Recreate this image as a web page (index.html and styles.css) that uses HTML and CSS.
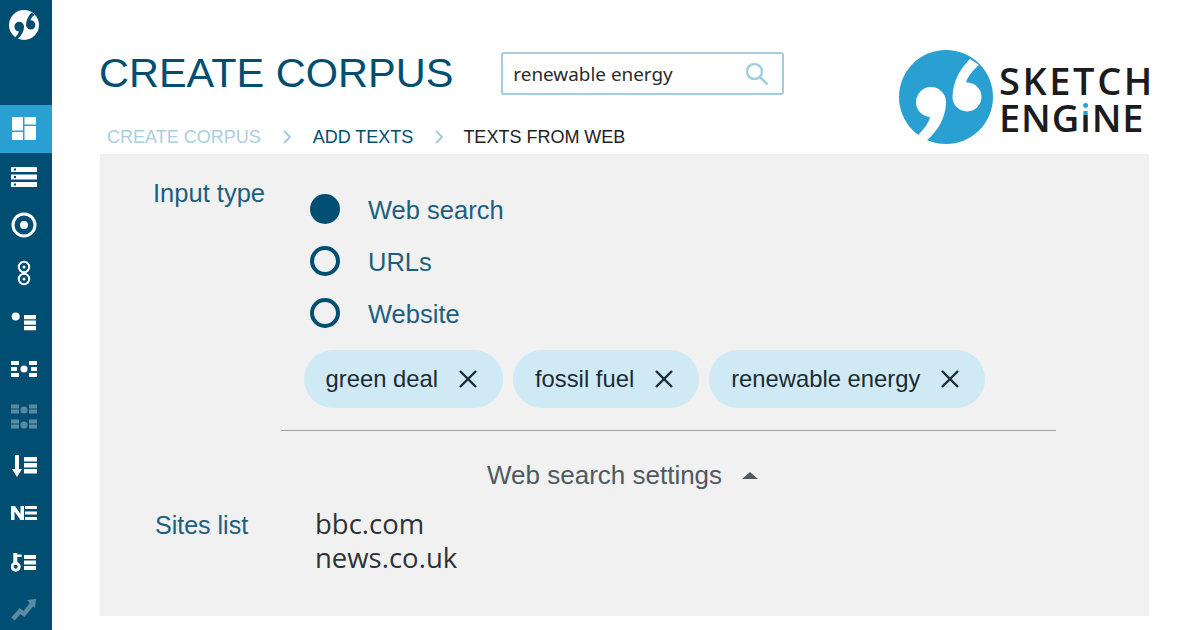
FILE: index.html
```html
<!DOCTYPE html>
<html lang="en">
<head>
<meta charset="utf-8">
<title>Create corpus</title>
<link rel="stylesheet" href="styles.css">
</head>
<body>
<div class="app">
  <nav class="sidebar">
    <div class="brand">
      <svg width="30" height="30" viewBox="0 0 94 94"><circle cx="47" cy="47" r="47" fill="#fff"/><path d="M17 52a15 15 0 0 1 30 0C47 68 38 82 27 91L19 85C26 78 30 72 31 67A15 15 0 0 1 17 52Z" fill="#004f73"/><path d="M53.500 47C54 30 62 18 71 9L80 15C74 20 69 26 67 32.500A14.500 14.500 0 1 1 53.500 47Z" fill="#004f73"/></svg>
    </div>
    <a class="nav-item active"><svg width="24" height="24" viewBox="0 0 24 24" fill="#fff"><rect x="0" y="0" width="11" height="13.500"/><rect x="12.500" y="0" width="11.500" height="7.500"/><rect x="12.500" y="9" width="11.500" height="14"/><rect x="0" y="15" width="11" height="8"/></svg></a>
    <a class="nav-item"><svg width="26" height="22" viewBox="0 0 26 22" fill="#fff"><path d="M0 1h26v5H0zM0 8.500h26v5H0zM0 16h26v5H0z"/><g fill="#004f73"><rect x="3" y="2.500" width="2" height="2"/><rect x="3" y="10" width="2" height="2"/><rect x="3" y="17.500" width="2" height="2"/></g></svg></a>
    <a class="nav-item"><svg width="26" height="26" viewBox="0 0 26 26"><circle cx="13" cy="13" r="11" fill="none" stroke="#fff" stroke-width="3"/><circle cx="13" cy="13" r="4" fill="#fff"/></svg></a>
    <a class="nav-item"><svg width="14" height="26" viewBox="0 0 14 26" fill="none" stroke="#fff" stroke-width="2"><circle cx="7" cy="7" r="5.200"/><circle cx="7" cy="19" r="5.200"/><circle cx="7" cy="7" r="1.500" fill="#fff" stroke="none"/><circle cx="7" cy="19" r="1.500" fill="#fff" stroke="none"/></svg></a>
    <a class="nav-item"><svg width="26" height="22" viewBox="0 0 26 22" fill="#fff"><circle cx="4.700" cy="6.600" r="4"/><path d="M13 5h12v4.200H13zM13 10.500h12v4.200H13zM13 16h12v4.200H13z"/></svg></a>
    <a class="nav-item"><svg width="26" height="18" viewBox="0 0 26 18" fill="#fff"><path d="M0 1h8v4H0zM0 13h8v4H0zM18 1h8v4h-8zM18 13h8v4h-8zM0 7h6v4H0zM20 7h6v4h-6z"/><circle cx="13" cy="9" r="3.500"/></svg></a>
    <a class="nav-item dim"><svg width="26" height="26" viewBox="0 0 26 26" fill="#fff"><path d="M0 .500h8v4H0zM18 .500h8v4h-8zM0 5.500h8v4H0zM18 5.500h8v4h-8zM0 15.500h8v4H0zM18 15.500h8v4h-8zM0 20.500h8v4H0zM18 20.500h8v4h-8z"/><circle cx="13" cy="6" r="3.500"/><circle cx="13" cy="21" r="3.500"/></svg></a>
    <a class="nav-item"><svg width="26" height="26" viewBox="0 0 26 26" fill="#fff"><path d="M4 3h4v14h3l-5 8-5-8h3z"/><path d="M13 5h13v4.500H13zM13 11h13v4.500H13zM13 17h13v4.500H13z"/></svg></a>
    <a class="nav-item"><svg width="26" height="24" viewBox="0 0 26 24" fill="#fff"><path d="M0 5h4l5.500 8V5H13v14H9.500L3.500 10.500V19H0z"/><path d="M14 5h12v3H14zM14 10.500h12v3H14zM14 16h12v3H14z"/></svg></a>
    <a class="nav-item"><svg width="26" height="24" viewBox="0 0 26 24"><rect x="2.300" y="4" width="4" height="10" fill="#fff"/><rect x="6" y="5.500" width="4.700" height="2.500" fill="#fff"/><circle cx="4.700" cy="17.700" r="3.500" fill="none" stroke="#fff" stroke-width="3"/><path d="M13 6h12v4H13zM13 11.500h12v4H13zM13 17h12v4H13z" fill="#fff"/></svg></a>
    <a class="nav-item dim"><svg width="26" height="26" viewBox="0 0 26 26" fill="none" stroke="#fff" stroke-width="4.500"><path d="M2 23l7-8 4 3 8-10"/><path d="M16 4l9-1-1 9z" fill="#fff" stroke="none"/></svg></a>
  </nav>
  <main class="main">
    <header class="top">
      <h1 class="title">CREATE CORPUS</h1>
      <div class="search">
        <span class="search-text">renewable energy</span>
        <svg width="24" height="24" viewBox="0 0 24 24" fill="none" stroke="#a3cde0" stroke-width="2.500"><circle cx="9.500" cy="9.500" r="7.500"/><path d="M15 15l7.500 7.500"/></svg>
      </div>
      <div class="logo">
        <svg width="94" height="94" viewBox="0 0 94 94"><circle cx="47" cy="47" r="47" fill="#2a9fd2"/><path d="M17 52a15 15 0 0 1 30 0C47 68 38 82 27 91L19 85C26 78 30 72 31 67A15 15 0 0 1 17 52Z" fill="#fff"/><path d="M53.500 47C54 30 62 18 71 9L80 15C74 20 69 26 67 32.500A14.500 14.500 0 1 1 53.500 47Z" fill="#fff"/></svg>
        <div class="wordmark"><span>SKETCH</span><span class="second">ENG<i class="blue-i">i</i>NE</span></div>
      </div>
    </header>
    <div class="crumbs">
      <span class="crumb-a">CREATE CORPUS</span>
      <svg class="chev" width="8" height="14" viewBox="0 0 8 14" fill="none" stroke="#a3cde0" stroke-width="2"><path d="M1 1l6 6-6 6"/></svg>
      <span class="crumb-b">ADD TEXTS</span>
      <svg class="chev" width="8" height="14" viewBox="0 0 8 14" fill="none" stroke="#a3cde0" stroke-width="2"><path d="M1 1l6 6-6 6"/></svg>
      <span class="crumb-c">TEXTS FROM WEB</span>
    </div>
    <section class="panel">
      <div class="input-row">
        <div class="label input-label">Input type</div>
        <div class="radios">
          <div class="radio"><span class="dot on"></span>Web search</div>
          <div class="radio"><span class="dot"></span>URLs</div>
          <div class="radio"><span class="dot"></span>Website</div>
        </div>
      </div>
      <div class="chips">
        <span class="chip">green deal<svg width="20" height="20" viewBox="0 0 20 20" stroke="#1c2a33" stroke-width="2.400"><path d="M2 2l16 16M18 2L2 18"/></svg></span>
        <span class="chip">fossil fuel<svg width="20" height="20" viewBox="0 0 20 20" stroke="#1c2a33" stroke-width="2.400"><path d="M2 2l16 16M18 2L2 18"/></svg></span>
        <span class="chip">renewable energy<svg width="20" height="20" viewBox="0 0 20 20" stroke="#1c2a33" stroke-width="2.400"><path d="M2 2l16 16M18 2L2 18"/></svg></span>
      </div>
      <hr class="rule">
      <div class="settings">Web search settings<span class="caret"></span></div>
      <div class="sites">
        <div class="label sites-label">Sites list</div>
        <div class="sites-value">bbc.com<br>news.co.uk</div>
      </div>
    </section>
  </main>
</div>
</body>
</html>
```
FILE: styles.css
```css
* { box-sizing: border-box; }
html, body { margin: 0; height: 100%; background: #fff; overflow: hidden; }
body { font-family: "Liberation Sans", Arial, sans-serif; }
.app { display: flex; height: 630px; }

.sidebar { width: 52px; flex: none; background: #004f73; display: flex; flex-direction: column; overflow: hidden; }
.brand { height: 105px; flex: none; display: flex; justify-content: center; padding: 10px 4px 0 0; }
.nav-item { height: 48px; flex: none; display: flex; align-items: center; justify-content: center; padding-right: 4px; }
.nav-item.active { background: #2a9fd2; }
.nav-item.dim svg { opacity: .35; }

.main { flex: 1; padding: 0 51px 0 47px; display: flex; flex-direction: column; min-width: 0; }
.top { height: 120px; flex: none; display: flex; align-items: flex-start; position: relative; }
.title { margin: 50px 0 0; font-weight: 400; font-size: 41.500px; line-height: 46px; color: #004f73; white-space: nowrap; }
.search { margin: 52px 0 0 48px; width: 283px; height: 43px; border: 2.500px solid #a3cde0; border-radius: 3px; display: flex; align-items: center; justify-content: space-between; padding: 0 13px 0 10px; }
.search-text { font-family: "Noto Sans", "Open Sans", sans-serif; font-size: 18.900px; color: #2b2b2b; }
.logo { display: flex; align-items: center; gap: 6px; position: absolute; right: -6px; top: 50px; }
.wordmark { display: flex; flex-direction: column; padding-top: 3px; font-family: "Open Sans", sans-serif; font-weight: 600; font-size: 38px; line-height: 37px; color: #1c1c1e; letter-spacing: 2.600px; }
.second { letter-spacing: .9px; }
.blue-i { font-style: normal; color: transparent; background: linear-gradient(#2a9fd2 0 47%, #1c1c1e 47% 100%); -webkit-background-clip: text; background-clip: text; }

.crumbs { height: 34px; flex: none; display: flex; align-items: center; font-size: 18px; margin-left: 8px; }
.crumb-a { color: #a9cfe0; }
.crumb-b { color: #004f73; }
.crumb-c { color: #222; margin-left: -2px; }
.chev { margin: 0 22px; }

.panel { margin-left: 1px; height: 462px; flex: none; background: #f1f1f1; display: flex; flex-direction: column; }
.label { color: #1c5f7f; }
.input-row { display: flex; height: 184px; flex: none; }
.input-label { margin: 25px 0 0 53px; width: 157px; font-size: 25.500px; line-height: 28px; }
.radios { margin-top: 30px; display: flex; flex-direction: column; flex: none; height: 156px; }
.radio { height: 52px; flex: none; display: flex; align-items: center; gap: 28px; font-size: 25.500px; color: #1c5f7f; }
.dot { width: 30px; height: 30px; margin-top: -2px; border-radius: 50%; border: 4px solid #004f73; flex: none; }
.dot.on { background: #004f73; }

.chips { display: flex; gap: 10px; margin: 12px 0 0 203.500px; }
.chip { height: 58px; border-radius: 29px; background: #cfeaf4; padding: 0 25px 0 22px; display: flex; align-items: center; gap: 20px; font-size: 23.800px; color: #1c2a33; white-space: nowrap; }

.rule { margin: 22px 0 0 181px; width: 775px; height: 1px; border: 0; background: #a0a0a0; }
.settings { margin: 27px 0 0 387px; height: 34px; display: flex; align-items: center; gap: 20px; font-size: 26px; color: #4f5a60; }
.caret { width: 0; height: 0; border-left: 8px solid transparent; border-right: 8px solid transparent; border-bottom: 7px solid #4f5a60; }
.sites { display: flex; margin: 15px 0 0 55px; }
.sites-label { width: 160px; padding-top: 1px; font-size: 25px; line-height: 34px; }
.sites-value { font-family: "Open Sans", sans-serif; font-size: 27.500px; line-height: 34px; color: #2b3338; }
```
